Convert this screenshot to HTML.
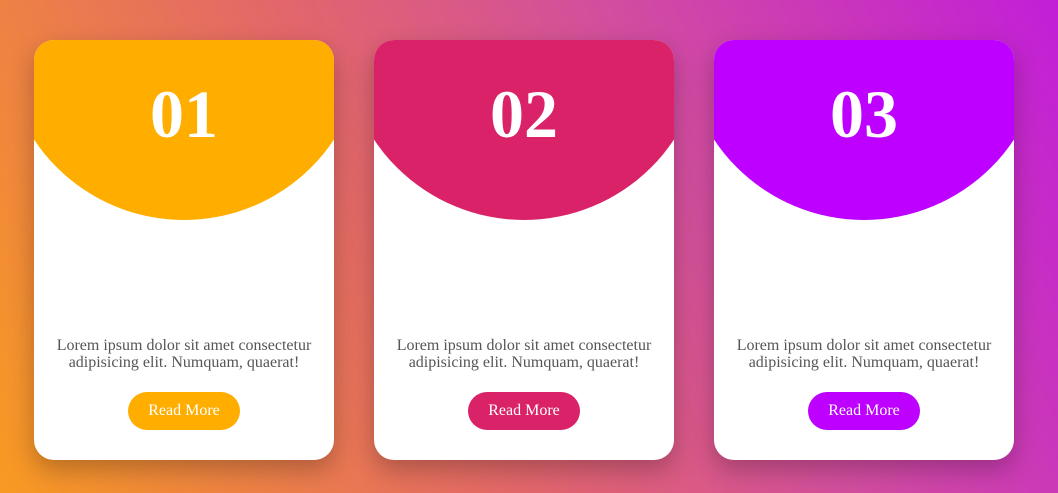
<!DOCTYPE html>
<html><head><meta charset="utf-8"><style>
*{margin:0;padding:0;box-sizing:border-box}
body{width:1058px;height:493px;overflow:hidden;background:linear-gradient(63deg,#f89a22 0%,#e2676a 40%,#d24e9e 65%,#c21ed8 100%);font-family:"Liberation Serif",serif;position:relative}
.card{position:absolute;top:40px;width:300px;height:420px;background:#fff;border-radius:20px;overflow:hidden;box-shadow:0 10px 25px rgba(0,0,0,0.25)}
.circ{position:absolute;left:-30px;top:-180px;width:360px;height:360px;border-radius:50%}
.num{position:absolute;left:0;width:300px;top:40px;text-align:center;color:#fff;font-weight:bold;font-size:68px;line-height:1}
.txt{position:absolute;left:0;width:300px;top:297px;text-align:center;color:#555;font-size:16px;line-height:17px}
.btn{position:absolute;left:94px;top:352px;width:112px;height:38px;border-radius:19px;color:#fff;font-size:16px;text-align:center;line-height:38px}
</style></head><body>
<div class="card" style="left:34px"><div class="circ" style="background:#ffae00"></div><div class="num">01</div><div class="txt">Lorem ipsum dolor sit amet consectetur<br>adipisicing elit. Numquam, quaerat!</div><div class="btn" style="background:#ffae00">Read More</div></div>
<div class="card" style="left:374px"><div class="circ" style="background:#da2268"></div><div class="num">02</div><div class="txt">Lorem ipsum dolor sit amet consectetur<br>adipisicing elit. Numquam, quaerat!</div><div class="btn" style="background:#da2268">Read More</div></div>
<div class="card" style="left:714px"><div class="circ" style="background:#bd00ff"></div><div class="num">03</div><div class="txt">Lorem ipsum dolor sit amet consectetur<br>adipisicing elit. Numquam, quaerat!</div><div class="btn" style="background:#bd00ff">Read More</div></div>
</body></html>
